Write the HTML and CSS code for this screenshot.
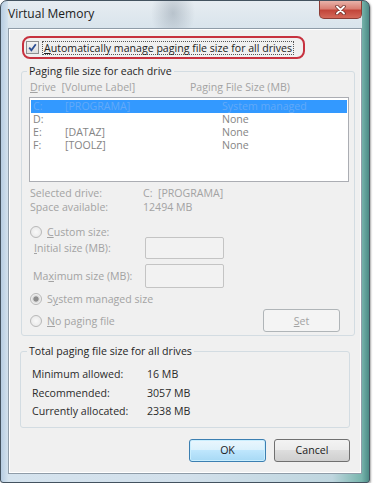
FILE: index.html
```html
<!DOCTYPE html>
<html lang="en">
<head>
    <meta charset="UTF-8">
    <title>Virtual Memory</title>
    <link rel="stylesheet" href="styles.css">
</head>
<body>
    <div class="window">
        <div class="titlebar">
            <span class="title">Virtual Memory</span>
            <div class="close">
                <svg width="11" height="10" viewBox="0 0 11 10">
                    <path d="M2 1.5 L9 8.5 M9 1.5 L2 8.5" stroke="#6b2a24" stroke-width="3.4" stroke-linecap="round"/>
                    <path d="M2 1.5 L9 8.5 M9 1.5 L2 8.5" stroke="#fff" stroke-width="1.9" stroke-linecap="round"/>
                </svg>
            </div>
        </div>

        <div class="content">
            <div class="auto-row">
                <span class="check">
                    <svg width="11" height="11" viewBox="0 0 11 11">
                        <path d="M2.2 5.6 L4.4 8.2 L8.8 2.2" fill="none" stroke="#2b4e93" stroke-width="1.8"/>
                    </svg>
                </span>
                <span class="focus"><u>A</u>utomatically manage paging file size for all drives</span>
            </div>

            <fieldset class="group drives">
                <legend>Paging file size for each drive</legend>
                <div class="cols">
                    <span class="col-drive"><u>D</u>rive&nbsp; [Volume Label]</span>
                    <span>Paging File Size (MB)</span>
                </div>
                <div class="listbox">
                    <div class="row selected"><span>C:</span><span>[PROGRAMA]</span><span>System managed</span></div>
                    <div class="row"><span>D:</span><span></span><span>None</span></div>
                    <div class="row"><span>E:</span><span>[DATAZ]</span><span>None</span></div>
                    <div class="row"><span>F:</span><span>[TOOLZ]</span><span>None</span></div>
                </div>
                <div class="info">
                    <span>Selected drive:</span><span>C:&nbsp; [PROGRAMA]</span>
                    <span>Space available:</span><span>12494 MB</span>
                </div>
                <div class="option custom"><span class="radio"></span><span><u>C</u>ustom size:</span></div>
                <div class="size-row">
                    <label class="initial"><u>I</u>nitial size (MB):</label>
                    <span class="textbox"></span>
                </div>
                <div class="size-row max">
                    <label>Ma<u>x</u>imum size (MB):</label>
                    <span class="textbox"></span>
                </div>
                <div class="option system"><span class="radio on"></span><span>S<u>y</u>stem managed size</span></div>
                <div class="option nofile">
                    <span class="radio"></span><span><u>N</u>o paging file</span>
                    <button class="btn set" disabled><u>S</u>et</button>
                </div>
            </fieldset>

            <fieldset class="group totals">
                <legend>Total paging file size for all drives</legend>
                <div class="sizes">
                    <span>Minimum allowed:</span><span>16 MB</span>
                    <span>Recommended:</span><span>3057 MB</span>
                    <span>Currently allocated:</span><span>2338 MB</span>
                </div>
            </fieldset>

            <div class="buttons">
                <button class="btn ok">OK</button>
                <button class="btn cancel">Cancel</button>
            </div>
        </div>
    </div>
</body>
</html>
```

FILE: styles.css
```css
body {
    margin: 0;
    background: #fff;
    font-family: 'Open Sans', 'Noto Sans', sans-serif;
    font-size: 10.6px;
    color: #222;
}
.window {
    box-sizing: border-box;
    width: 370px;
    height: 483px;
    padding: 0 7px 8px;
    border: 1px solid #43525f;
    border-radius: 7px 7px 3px 3px;
    background: linear-gradient(to right, #b7cde2 0, #d5e3ee 2%, #d2e0eb 50%, #bfd6df 90%, #78b5ad 98%, #4c8b86 100%);
    box-shadow: 1px 1px 2px rgba(0, 0, 0, 0.35);
}
.titlebar {
    height: 27px;
    display: flex;
    justify-content: space-between;
    align-items: flex-start;
    background: radial-gradient(ellipse 22px 30px at 165px 12px, rgba(110, 125, 140, 0.35), rgba(110, 125, 140, 0)),
                linear-gradient(#e6ecf1, #d9e4ec);
}
.title {
    margin-top: 6px;
    font-size: 12px;
    line-height: 13px;
    color: #1b1b1b;
}
.close {
    width: 43px;
    height: 18px;
    box-sizing: border-box;
    display: flex;
    align-items: center;
    justify-content: center;
    border: 1px solid #8c3d36;
    border-top: none;
    border-radius: 0 0 5px 5px;
    background: linear-gradient(#e8b2a9 0, #d98074 45%, #c2463a 55%, #d4695a 100%);
}
.content {
    box-sizing: border-box;
    height: 446px;
    padding: 7px 3px 0 12px;
    background: #f0f0f0;
    border: 1px solid #8f9ca8;
    box-shadow: inset 0 0 0 1px #fff;
}
.auto-row {
    box-sizing: border-box;
    width: 283px;
    height: 23px;
    margin-left: 1px;
    padding-left: 2px;
    display: flex;
    align-items: center;
    border: 2px solid #c7323f;
    border-radius: 8px;
}
.check {
    box-sizing: border-box;
    width: 13px;
    height: 13px;
    display: flex;
    align-items: center;
    justify-content: center;
    border: 1px solid #8e8f8f;
    background: linear-gradient(#f4f4f4, #dedede);
}
.focus {
    margin-left: 3px;
    padding: 0 1px;
    line-height: 12px;
    white-space: nowrap;
    border: 1px dotted #555;
}
.group {
    margin: 6px 3px 0 0;
    padding: 3px 5px 3px 7px;
    min-width: 0;
    border: 1px solid #d3dce2;
    border-radius: 3px;
}
.group legend {
    margin-left: -2px;
    padding: 0 2px;
    line-height: 13px;
    color: #1f1f1f;
}
.cols {
    display: flex;
    padding-left: 1px;
    line-height: 13px;
    color: #a3a3a3;
}
.col-drive {
    width: 160px;
}
.listbox {
    box-sizing: border-box;
    height: 85px;
    margin-top: 3px;
    padding: 2px 1px;
    border: 1px solid #abadb3;
    background: #fff;
}
.row {
    display: grid;
    grid-template-columns: 32px 157px 1fr;
    height: 13px;
    padding-left: 2px;
    line-height: 13px;
    color: #858585;
}
.row.selected {
    background: #3399ff;
    color: #62a9f8;
}
.info {
    display: grid;
    grid-template-columns: 113px auto;
    margin-top: 4px;
    padding-left: 1px;
    line-height: 14px;
    color: #a3a3a3;
}
.option {
    display: flex;
    align-items: center;
    padding-left: 1px;
    color: #a3a3a3;
}
.option.custom {
    height: 11px;
    margin-top: 12px;
}
.option.system {
    height: 12px;
    margin-top: 5px;
}
.option.nofile {
    height: 23px;
    margin-top: 4px;
}
.radio {
    box-sizing: border-box;
    flex: none;
    width: 12px;
    height: 12px;
    margin-right: 5px;
    border: 1px solid #b8b8b8;
    border-radius: 50%;
    background: radial-gradient(circle, #f9f9f9 0, #e4e4e4 100%);
}
.radio.on {
    background: radial-gradient(circle, #8d8d8d 0, #8d8d8d 2.2px, #d5d5d5 3px, #efefef 4.5px, #f7f7f7 100%);
}
.size-row {
    display: flex;
    align-items: center;
    height: 22px;
    color: #a3a3a3;
}
.size-row.max {
    height: 24px;
    margin-top: 5px;
}
.size-row label {
    box-sizing: border-box;
    width: 116px;
    padding-left: 4px;
}
.size-row label.initial {
    padding-left: 5px;
}
.textbox {
    box-sizing: border-box;
    width: 79px;
    height: 100%;
    border: 1px solid #c4c4c4;
    border-radius: 2px;
    background: #f2f2f2;
}
.btn {
    box-sizing: border-box;
    width: 77px;
    height: 23px;
    padding: 0;
    font: inherit;
    color: #1a1a1a;
    border: 1px solid #707070;
    border-radius: 3px;
    background: linear-gradient(#f3f3f3 0, #ebebeb 50%, #dddddd 50%, #cfcfcf 100%);
}
.btn.set {
    margin-left: auto;
    margin-right: 9px;
    color: #a3a3a3;
    border-color: #b0b5b8;
    background: #f4f4f4;
}
.btn.ok {
    border-color: #3c7fb1;
    background: linear-gradient(#eaf6fd 0, #d9f0fc 50%, #bee6fd 50%, #a7d9f5 100%);
    box-shadow: inset 0 0 0 1px #c9eefe;
}
.btn.cancel {
    width: 76px;
}
.totals {
    margin: 9px 8px 0 -1px;
    padding: 7px 7px 6px 11px;
}
.totals legend {
    margin-left: -5px;
}
.sizes {
    display: grid;
    grid-template-columns: 115px auto;
    line-height: 18.5px;
    color: #2b2b2b;
}
.buttons {
    display: flex;
    justify-content: flex-end;
    gap: 8px;
    margin: 11px 8px 0 0;
}
```
